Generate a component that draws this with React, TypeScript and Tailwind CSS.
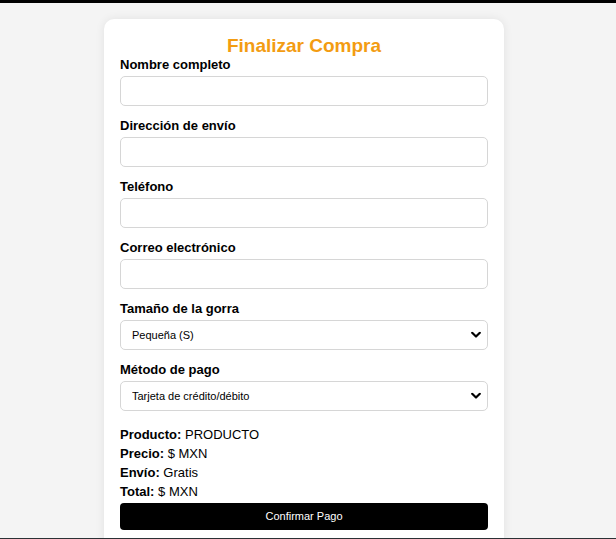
import React from "react";

function Chevron() {
  return (
    <svg
      className="pointer-events-none absolute right-[7px] top-1/2 -translate-y-1/2"
      width="10"
      height="7"
      viewBox="0 0 10 7"
      fill="none"
    >
      <path d="M1.2 1.3 L5 5 L8.8 1.3" stroke="#000" strokeWidth="2.2" strokeLinecap="round" strokeLinejoin="round" />
    </svg>
  );
}

function Field({ label }: { label: string }) {
  return (
    <div className="mb-3">
      <label className="block text-[13px] font-bold leading-[15px] text-black mb-1">{label}</label>
      <input
        type="text"
        className="block w-full h-[30px] rounded-[5px] border border-[#d6d6d6] bg-white px-2 text-[13px] outline-none"
      />
    </div>
  );
}

function SelectField({ label, options }: { label: string; options: string[] }) {
  return (
    <div className="mb-3">
      <label className="block text-[13px] font-bold leading-[15px] text-black mb-1">{label}</label>
      <div className="relative">
        <select className="block w-full h-[30px] appearance-none rounded-[5px] border border-[#d6d6d6] bg-white pl-[11px] pr-6 text-[11px] text-black outline-none">
          {options.map((o) => (
            <option key={o}>{o}</option>
          ))}
        </select>
        <Chevron />
      </div>
    </div>
  );
}

export default function App() {
  return (
    <div
      className="min-h-[539px] bg-[#f4f4f4] border-t-[3px] border-black"
      style={{ fontFamily: '"Liberation Sans", Arial, sans-serif' }}
    >
      <div className="pr-2 pt-4">
        <div className="mx-auto w-[400px] rounded-[10px] bg-white px-4 pt-4 pb-5 shadow-[0_0_10px_rgba(0,0,0,0.08)]">
          <h2 className="text-center text-[19px] font-bold leading-[22px] text-[#f39c12]">Finalizar Compra</h2>

          <Field label="Nombre completo" />
          <Field label="Dirección de envío" />
          <Field label="Teléfono" />
          <Field label="Correo electrónico" />
          <SelectField label="Tamaño de la gorra" options={["Pequeña (S)", "Mediana (M)", "Grande (L)"]} />
          <SelectField label="Método de pago" options={["Tarjeta de crédito/débito", "PayPal", "Transferencia"]} />

          <div className="mt-[14px] text-[13px] leading-[19px] text-black">
            <p><span className="font-bold">Producto:</span> PRODUCTO</p>
            <p><span className="font-bold">Precio:</span> $ MXN</p>
            <p><span className="font-bold">Envío:</span> Gratis</p>
            <p><span className="font-bold">Total:</span> $ MXN</p>
          </div>

          <button className="mt-[2px] block w-full h-[27px] rounded-[4px] bg-black text-[11px] text-white">
            Confirmar Pago
          </button>
        </div>
      </div>
      <div className="fixed bottom-0 left-0 right-0 h-px bg-[#2b3135]" />
    </div>
  );
}
